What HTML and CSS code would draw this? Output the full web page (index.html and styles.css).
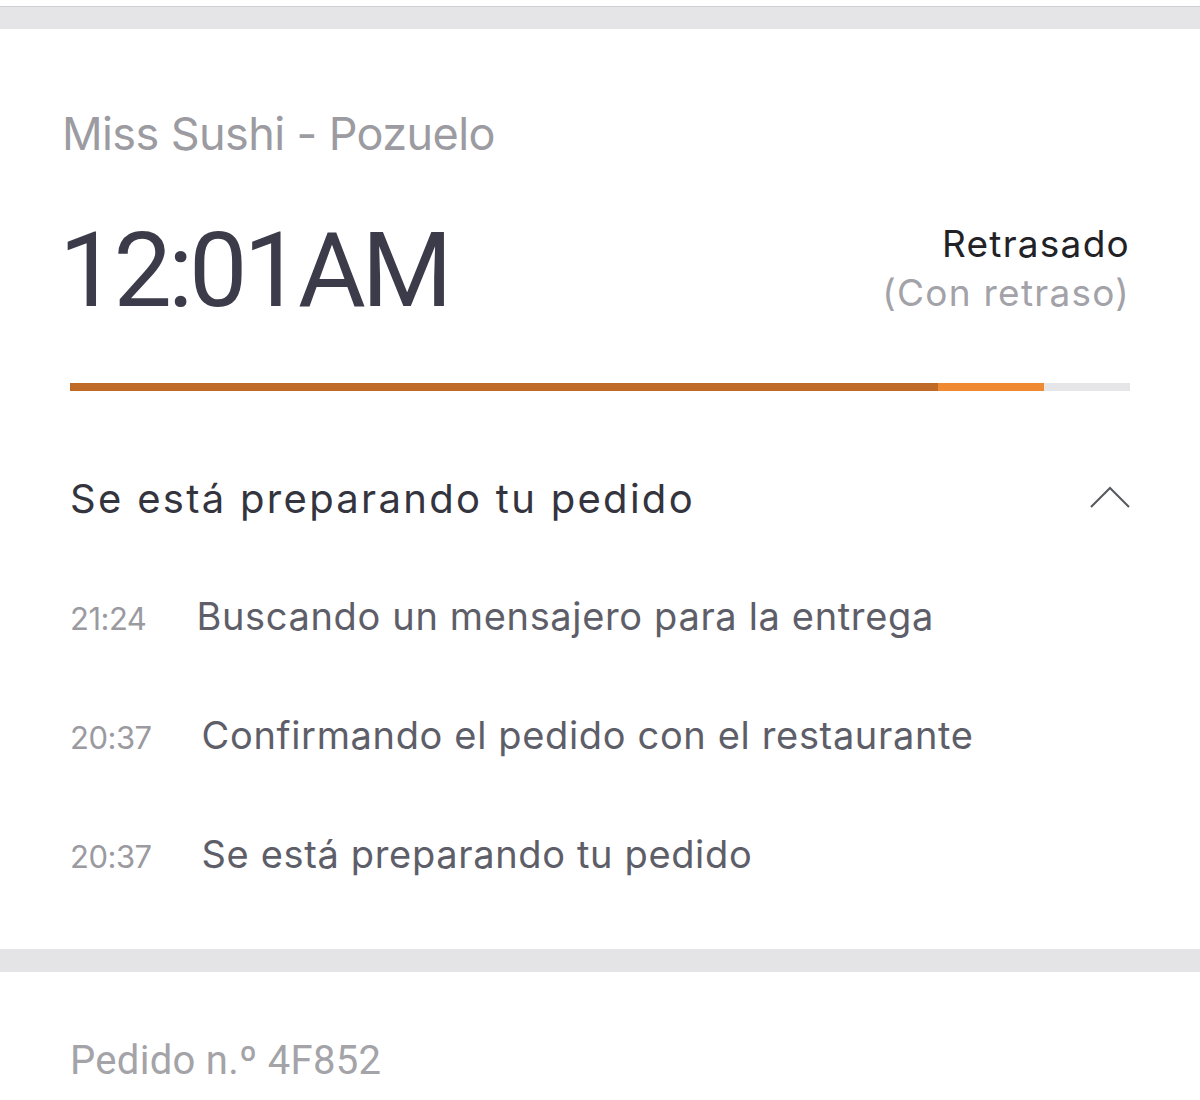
FILE: index.html
```html
<!DOCTYPE html>
<html lang="es">
<head>
<meta charset="utf-8">
<title>Pedido</title>
<link rel="stylesheet" href="styles.css">
</head>
<body>
<div class="band band-top"></div>
<section class="card">
  <div class="restaurant">Miss Sushi - Pozuelo</div>
  <div class="eta-row">
    <div class="eta">12:01AM</div>
    <div class="status">
      <div class="status-main">Retrasado</div>
      <div class="status-sub">(Con retraso)</div>
    </div>
  </div>
  <div class="progress">
    <div class="progress-done" style="width:81.9%"></div>
    <div class="progress-active" style="width:10%"></div>
  </div>
  <div class="stage-head">
    <div class="stage-title">Se está preparando tu pedido</div>
    <svg class="chevron" width="40" height="22" viewBox="0 0 40 22"><polyline points="1,21 20,2 39,21" fill="none" stroke="#57575f" stroke-width="2"/></svg>
  </div>
  <ul class="events">
    <li class="event"><span class="event-time">21:24</span><span class="event-text">Buscando un mensajero para la entrega</span></li>
    <li class="event"><span class="event-time">20:37</span><span class="event-text">Confirmando el pedido con el restaurante</span></li>
    <li class="event"><span class="event-time">20:37</span><span class="event-text">Se está preparando tu pedido</span></li>
  </ul>
</section>
<div class="band band-mid"></div>
<section class="order">
  <div class="order-id">Pedido n.º 4F852</div>
</section>
</body>
</html>
```
FILE: styles.css
```css
html, body {
  margin: 0;
  padding: 0;
  background: #ffffff;
}
body {
  font-family: Inter, Roboto, "Noto Sans", sans-serif;
  width: 1200px;
  height: 1100px;
  overflow: hidden;
}
.band {
  background: #e5e5e8;
}
.band-top {
  margin-top: 6px;
  border-top: 1px solid #cfcfd2;
  height: 22px;
}
.band-mid {
  height: 23px;
  background: #e4e4e7;
}
.card {
  padding: 0 70px 35px 70px;
}
.restaurant {
  margin: 77px 0 0 -8px;
  font-size: 45px;
  line-height: 56px;
  color: #9b9ba1;
  letter-spacing: -0.6px;
}
.eta-row {
  display: flex;
  justify-content: space-between;
  align-items: flex-start;
  margin-top: 57px;
}
.eta {
  margin-left: -11px;
  font-family: Roboto, sans-serif;
  font-size: 104px;
  line-height: 104px;
  color: #3b3b4a;
  letter-spacing: -4px;
}
.status {
  text-align: right;
  font-size: 37px;
  line-height: 49px;
  letter-spacing: 1.25px;
}
.status-main {
  color: #222226;
}
.status-sub {
  color: #a2a2a8;
}
.progress {
  display: flex;
  margin-top: 60px;
  height: 8px;
  background: #e6e6e8;
}
.progress-done {
  background: #c06a28;
}
.progress-active {
  background: #ef8a33;
}
.stage-head {
  display: flex;
  justify-content: space-between;
  align-items: center;
  margin-top: 84px;
  height: 48px;
}
.stage-title {
  font-size: 40px;
  line-height: 48px;
  color: #34343e;
  letter-spacing: 2.3px;
}
.chevron {
  display: block;
  margin-bottom: 4px;
}
.events {
  list-style: none;
  margin: 34px 0 0 0;
  padding: 0;
}
.event {
  display: flex;
  align-items: baseline;
  height: 119px;
  line-height: 119px;
}
.event-time {
  font-size: 31px;
  color: #9a9aa0;
  margin-right: 50px;
  letter-spacing: -0.5px;
}
.event-text {
  font-size: 38px;
  color: #5e5e69;
  letter-spacing: 0.65px;
}
.order {
  padding: 65px 70px 0 70px;
}
.order-id {
  font-family: Roboto, sans-serif;
  font-size: 40px;
  line-height: 48px;
  color: #a3a3a8;
  letter-spacing: 0.3px;
}
```
